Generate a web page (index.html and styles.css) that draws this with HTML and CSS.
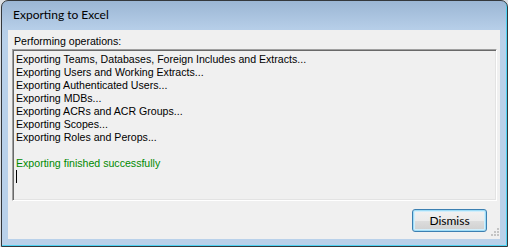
FILE: index.html
```html
<!DOCTYPE html>
<html lang="en">
  <head>
    <meta charset="UTF-8" />
    <title>Exporting to Excel</title>
    <link rel="stylesheet" href="styles.css">
  </head>
  <body>
    <div class="window">
      <div class="titlebar">Exporting to Excel</div>
      <div class="client">
        <div class="label">Performing operations:</div>
        <div class="log">
          <div>Exporting Teams, Databases, Foreign Includes and Extracts...</div>
          <div>Exporting Users and Working Extracts...</div>
          <div>Exporting Authenticated Users...</div>
          <div>Exporting MDBs...</div>
          <div>Exporting ACRs and ACR Groups...</div>
          <div>Exporting Scopes...</div>
          <div>Exporting Roles and Perops...</div>
          <div>&nbsp;</div>
          <div class="ok">Exporting finished successfully</div>
          <div><span class="caret"></span></div>
        </div>
        <div class="actions">
          <button class="btn">Dismiss</button>
        </div>
        <svg class="grip" width="12" height="12" viewBox="0 0 12 12">
          <rect x="9" y="1" width="2" height="2" fill="#c4c4c4" />
          <rect x="6" y="4" width="2" height="2" fill="#c4c4c4" />
          <rect x="9" y="4" width="2" height="2" fill="#c4c4c4" />
          <rect x="3" y="7" width="2" height="2" fill="#c4c4c4" />
          <rect x="6" y="7" width="2" height="2" fill="#c4c4c4" />
          <rect x="9" y="7" width="2" height="2" fill="#c4c4c4" />
        </svg>
      </div>
    </div>
  </body>
</html>
```

FILE: styles.css
```css
* {
  margin: 0;
  padding: 0;
  box-sizing: border-box;
}
body {
  width: 508px;
  height: 247px;
  overflow: hidden;
  background: #dcdfe3;
  font-family: "Liberation Sans", Arial, sans-serif;
  font-size: 10.6px;
}
.window {
  margin-left: 1px;
  width: 507px;
  height: 247px;
  display: flex;
  flex-direction: column;
  border: 1px solid #34383c;
  border-radius: 7px 7px 0 0;
  background: linear-gradient(#9bb6d4 0, #b6cee8 28px, #b9d1ea 40px);
  box-shadow: inset -1px -1px 0 #4fd3f3;
}
.titlebar {
  height: 29px;
  padding: 6px 0 0 11px;
  font-family: Lato, "Noto Sans", sans-serif;
  font-size: 12px;
  color: #000;
}
.client {
  position: relative;
  flex: 1;
  margin: 0 7px 7px 6px;
  background: #f0f0f0;
  display: flex;
  flex-direction: column;
}
.label {
  padding: 5px 0 0 6px;
  height: 19px;
  line-height: 13px;
}
.log {
  margin: 0 3px 0 4px;
  height: 152px;
  padding: 3px 2px;
  line-height: 13px;
  border: 1px solid;
  border-color: #a0a0a0 #fff #fff #a0a0a0;
  box-shadow: inset 1px 1px 0 #696969, inset -1px -1px 0 #e3e3e3;
  color: #000;
  white-space: nowrap;
}
.log div {
  padding-left: 1px;
}
.ok {
  color: #008a00;
}
.caret {
  display: inline-block;
  width: 1px;
  height: 13px;
  background: #000;
  vertical-align: top;
}
.actions {
  display: flex;
  justify-content: flex-end;
  padding: 8px 13px 0 0;
}
.btn {
  width: 75px;
  height: 23px;
  font-family: Lato, "Liberation Sans", sans-serif;
  font-size: 12px;
  color: #000;
  border: 1px solid #3c7fb1;
  border-radius: 3px;
  background: linear-gradient(#f2f2f2 0, #ebebeb 50%, #dddddd 51%, #cfcfcf 100%);
  box-shadow: inset 0 0 0 1px #9fdcf6, inset 0 0 0 2px #d2eefb;
}
.grip {
  position: absolute;
  right: 0;
  bottom: 0;
}
```
